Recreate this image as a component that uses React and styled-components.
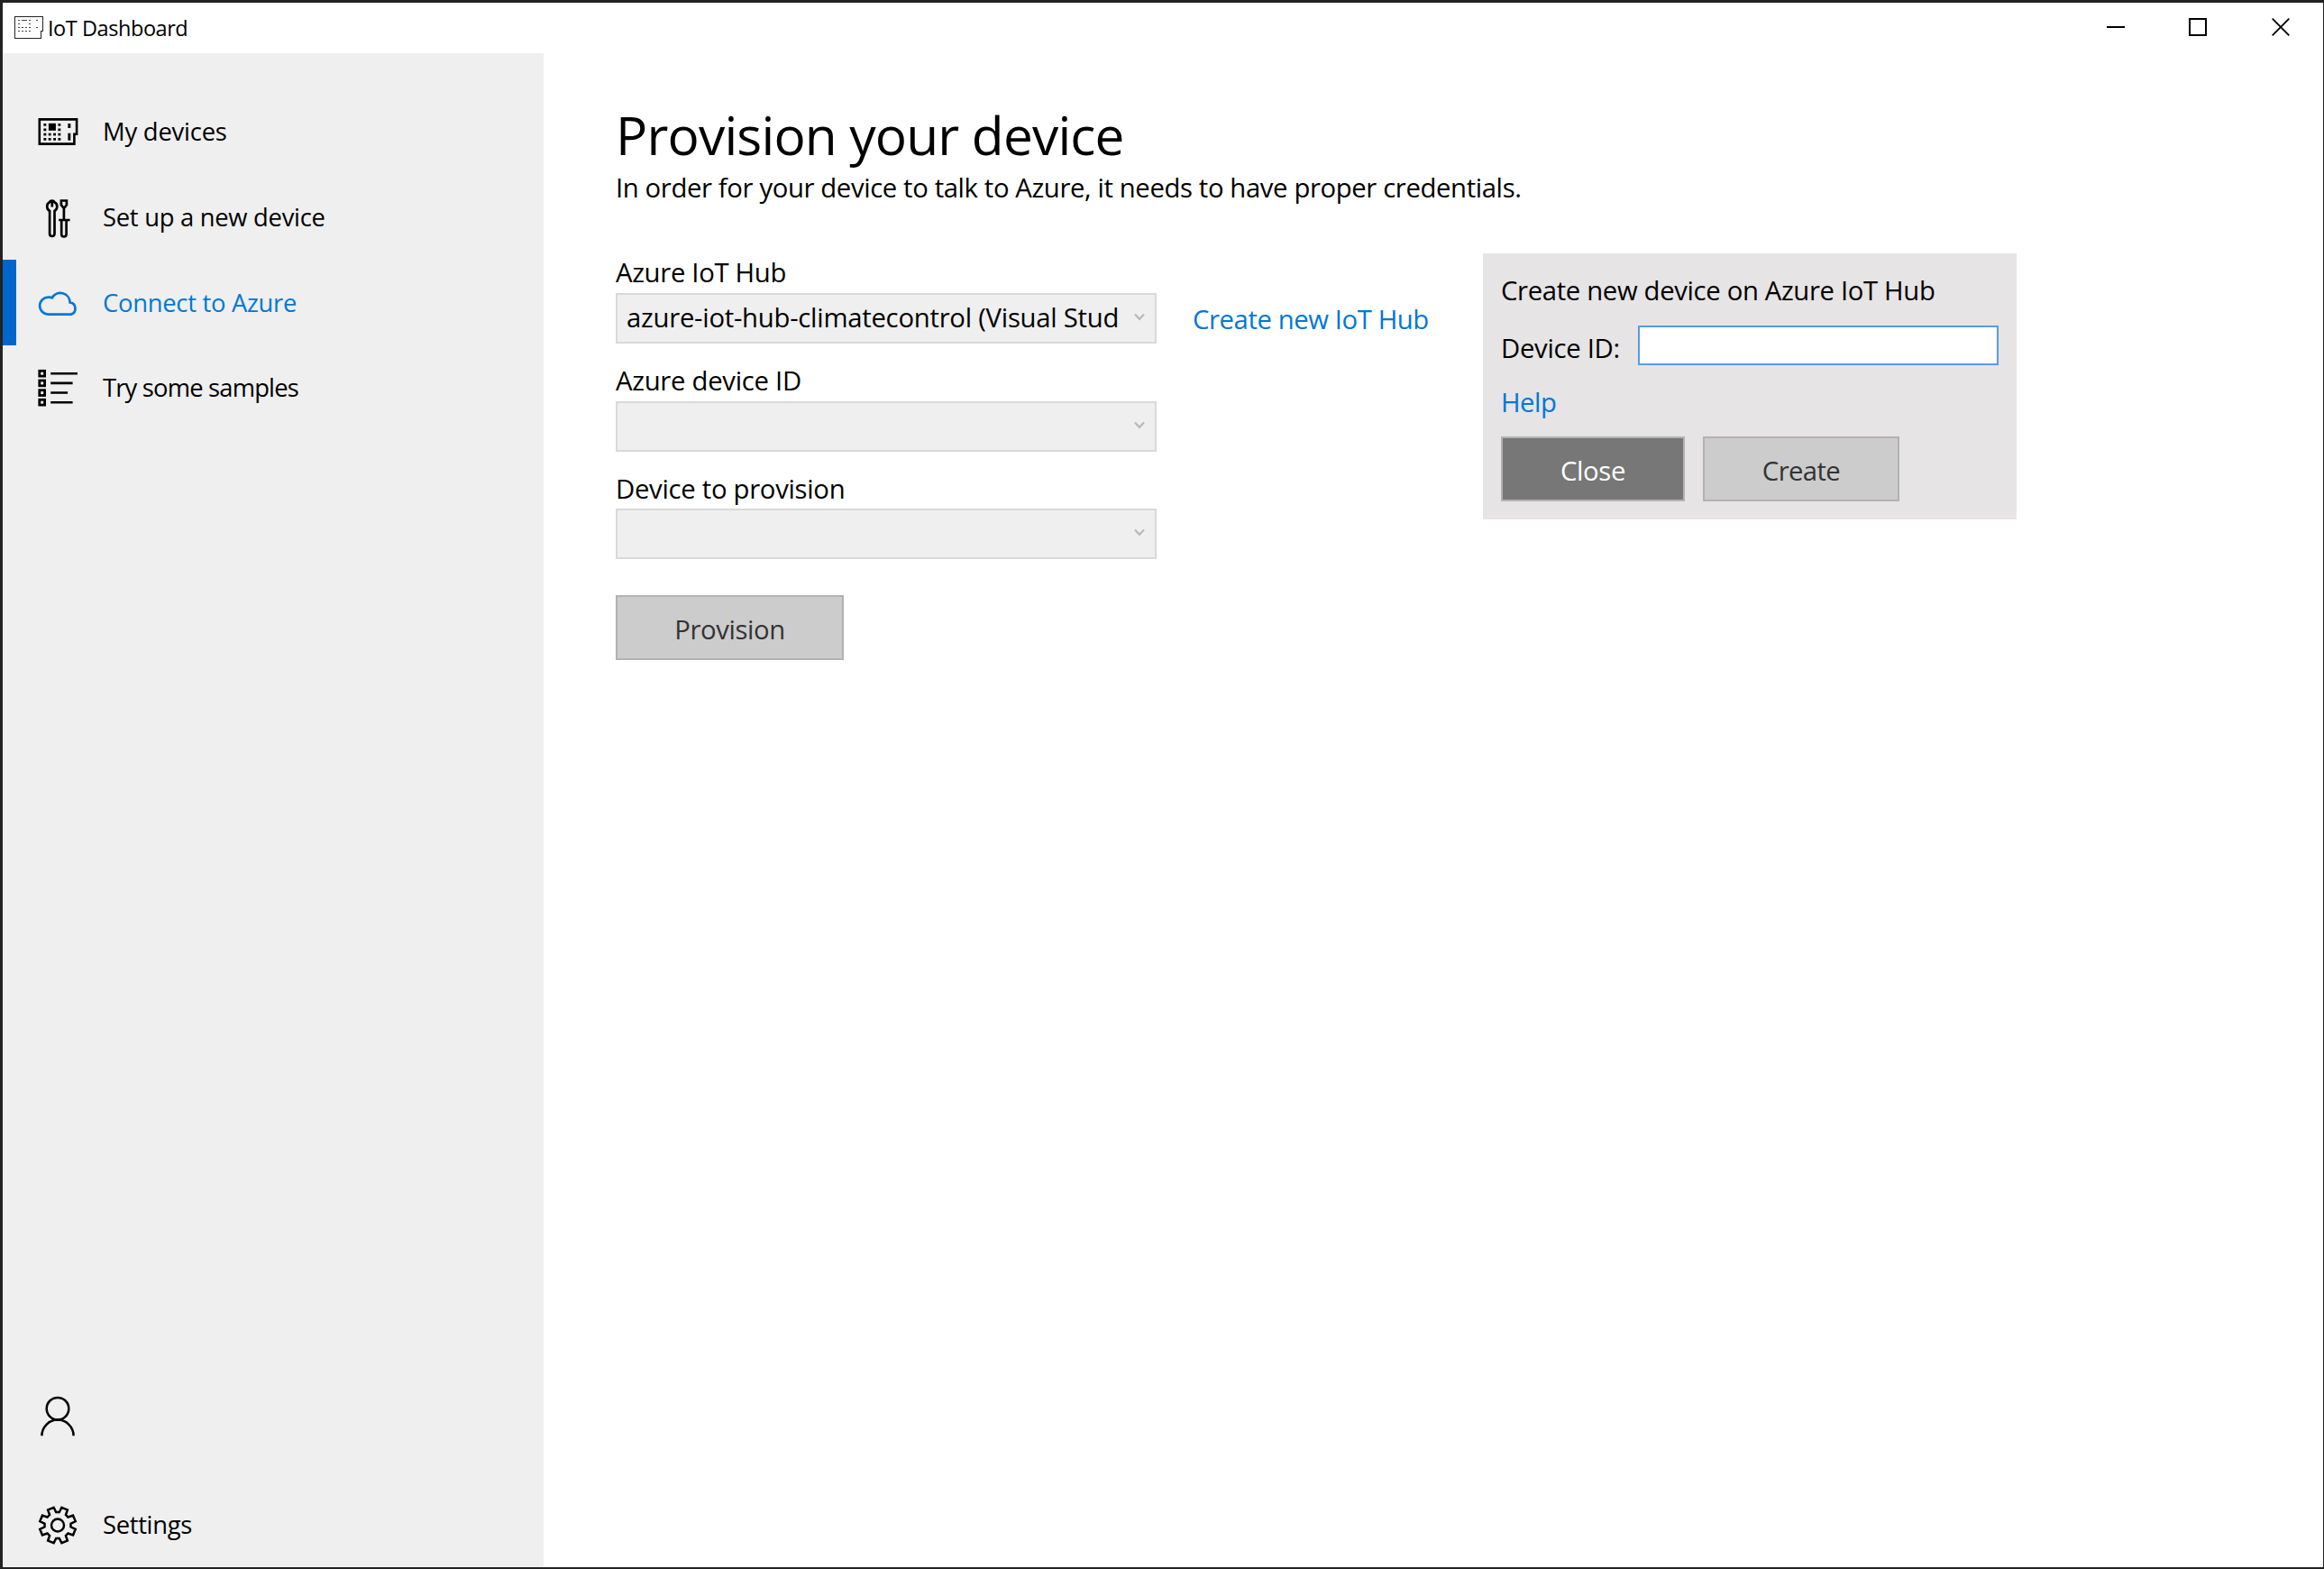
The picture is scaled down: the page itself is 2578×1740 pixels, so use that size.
import React from "react";
import styled, { createGlobalStyle } from "styled-components";

const GlobalStyle = createGlobalStyle`
  * { box-sizing: border-box; }
  body {
    margin: 0;
    background: #222;
    font-family: "Open Sans", "Liberation Sans", sans-serif;
    color: #000;
  }
`;

const AppWindow = styled.div`
  display: flex;
  flex-direction: column;
  width: 100vw;
  height: 100vh;
  padding: 3px 1px 2px 3px;
  background: #222;
  overflow: hidden;
`;

const TitleBar = styled.header`
  display: flex;
  align-items: center;
  flex: none;
  height: 56px;
  padding-left: 13px;
  background: #fff;
`;

const WindowTitle = styled.span`
  flex: 1;
  margin-left: 5px;
  font-size: 23.5px;
  line-height: 32px;
  letter-spacing: -0.44px;
`;

const WindowButtons = styled.div`
  display: flex;
  height: 100%;
`;

const WindowButton = styled.button`
  display: grid;
  place-items: center;
  width: ${(p) => p.$width ?? 92}px;
  padding: 0 0 2px;
  border: 0;
  background: none;
`;

const Body = styled.div`
  display: flex;
  flex: 1;
  min-height: 0;
`;

const Sidebar = styled.nav`
  display: flex;
  flex-direction: column;
  flex: none;
  width: 600px;
  padding-top: 39px;
  background: #efefef;
`;

const NavItem = styled.a`
  display: flex;
  align-items: center;
  gap: 28px;
  height: 95px;
  padding-left: 24px;
  border-left: 15px solid ${(p) => (p.$active ? "#0066cc" : "transparent")};
  color: ${(p) => (p.$active ? "#0078d7" : "#000")};
`;

const NavLabel = styled.span`
  padding-bottom: ${(p) => p.$lift ?? 0}px;
  font-size: 27.4px;
  line-height: 41px;
  letter-spacing: ${(p) => p.$track}px;
`;

const NavSpacer = styled.div`
  flex: 1;
`;

const AccountItem = styled(NavItem)`
  margin-bottom: 24px;
`;

const Main = styled.main`
  flex: 1;
  padding: 55px 0 0 79px;
  background: #fff;
`;

const Heading = styled.h1`
  margin: 0;
  padding-left: 1px;
  font-size: 58.6px;
  font-weight: 400;
  line-height: 70px;
  letter-spacing: -0.83px;
`;

const Text = styled.div`
  font-size: 29.3px;
  line-height: 40px;
  letter-spacing: ${(p) => p.$track ?? -0.35}px;
  white-space: nowrap;
`;

const Intro = styled(Text)`
  margin: 4px 0 53px 1px;
`;

const Columns = styled.div`
  display: flex;
  align-items: flex-start;
  gap: 40px;
  padding-left: 1px;
`;

const Form = styled.div`
  display: flex;
  flex-direction: column;
  align-items: flex-start;
  width: 600px;
`;

const Field = styled.div`
  width: 100%;
  margin-bottom: 20px;
`;

const FieldLabel = styled(Text)`
  height: ${(p) => p.$height ?? 44}px;
  padding-top: 1px;
`;

const SelectBox = styled.div`
  display: flex;
  align-items: flex-start;
  height: 56px;
  padding: 5px 0 0 10px;
  border: 2px solid #d9d9d9;
  background: #efefef;
`;

const SelectValue = styled(Text)`
  width: 545px;
  overflow: hidden;
`;

const Chevron = styled.svg`
  flex: none;
  margin: 15px 0 0 18px;
`;

const Button = styled.button`
  width: ${(p) => p.$width}px;
  height: 72px;
  padding: 3px 0 0;
  border: 2px solid #b2b2b2;
  background: ${(p) => (p.$dark ? "#777" : "#ccc")};
  color: ${(p) => (p.$dark ? "#fff" : "#333")};
  font-family: inherit;
  font-size: 29.3px;
  line-height: 40px;
  letter-spacing: ${(p) => p.$track}px;
`;

const ProvisionButton = styled(Button)`
  margin-top: 20px;
`;

const HubLink = styled(Text)`
  width: 282px;
  margin-top: 53px;
  color: #0078d7;
`;

const Panel = styled.section`
  width: 592px;
  height: 295px;
  padding: 21px 20px 20px;
  background: #e6e4e5;
`;

const DeviceRow = styled.label`
  display: flex;
  align-items: flex-end;
  justify-content: space-between;
  height: 44px;
  margin: 19px 0 21px;
`;

const DeviceLabel = styled(Text)`
  line-height: 38px;
`;

const DeviceInput = styled.input`
  width: 400px;
  height: 44px;
  padding: 0 8px;
  border: 2px solid #569de5;
  border-radius: 0;
  outline: 0;
  background: #fff;
  font: inherit;
`;

const HelpLink = styled(Text)`
  color: #0078d7;
  margin-bottom: 18px;
`;

const ButtonRow = styled.div`
  display: flex;
  gap: 20px;
`;

const NavIcon = ({ top, left = 42, children }) => (
  <svg width="44" height="47" viewBox={`${left} ${top} 44 47`} fill="none" stroke="currentColor" strokeWidth="2.5" overflow="visible">
    {children}
  </svg>
);

const AppIcon = () => (
  <svg width="32" height="26" viewBox="16 18 32 26" fill="none" stroke="#222" shapeRendering="crispEdges">
    <path d="M16.5 18.5H47.5V34.5H45.5V42.5H16.5Z" />
    <path
      stroke="#444"
      d="M20 22.5h2M24 22.5h6M32 22.5h2M40 22.5h2M20 26.5h2M32 26.5h2M20 30.5h2M24 30.5h2M28 30.5h2M32 30.5h2M40 30.5h2M20 34.5h2M24 34.5h2M28 34.5h2M32 34.5h2"
    />
  </svg>
);

const BoardIcon = () => {
  const columns = [48, 53.3, 58.7, 64];
  const rows = [137, 142.5, 147.7, 153];
  return (
    <NavIcon top={122} left={41.6}>
      <path strokeWidth="2.6" d="M43.4 132.4H84.7V148.8H82V159.6H43.4Z" />
      <g fill="currentColor" stroke="none">
        {rows.map((y, r) =>
          columns.map((x, c) =>
            r < 2 && (c === 1 || c === 2) ? null : <rect key={`${x}-${y}`} x={x} y={y} width="2.9" height="2.7" />
          )
        )}
        <rect x="53.5" y="136.8" width="8" height="8" />
        <rect x="75" y="137" width="2.9" height="5" />
        <rect x="75" y="147.7" width="2.9" height="8" />
      </g>
    </NavIcon>
  );
};

const ToolsIcon = () => (
  <NavIcon top={217} left={41.8}>
    <path
      strokeWidth="2.7"
      d="M54.8 224.2C53 225 52 226.8 52 229C52 231.2 53.1 233 54.9 234V259.3A2.7 2.7 0 0 0 60.3 259.3V234C62 233 63.1 231.2 63.1 229C63.1 226.8 62 225 60.2 224.2C59.4 222.1 55.6 222.1 54.8 224.2ZM57.6 223V229.4"
    />
    <path strokeWidth="2.7" d="M67.7 222.5H73.7V227.3L71.6 230H69.8L67.7 227.3ZM70.7 230V244M65 244H77.4M68 244V259.8A2.7 2.7 0 0 0 73.4 259.8V244" />
  </NavIcon>
);

const CloudIcon = () => (
  <NavIcon top={312} left={41.4}>
    <path
      strokeWidth="2.7"
      d="M52.8 348.6A9.5 9.5 0 0 1 53.2 329.6Q55.2 329.4 57.2 330.3A10.6 10.6 0 0 1 77 335.4A6.8 6.8 0 0 1 78.2 348.6Z"
    />
  </NavIcon>
);

const ListIcon = () => (
  <NavIcon top={407} left={41.4}>
    {[411.3, 422, 432.7, 443.3].map((y) => (
      <rect key={y} x="43.2" y={y} width="5.8" height="5.8" strokeWidth="2.8" />
    ))}
    <path strokeWidth="2.6" d="M55.6 414.2H85.4M55.6 424.9H80M55.6 435.5H74.5M55.6 446.2H80" />
  </NavIcon>
);

const PersonIcon = () => (
  <NavIcon top={1548}>
    <circle cx="64" cy="1562.2" r="12.3" />
    <path d="M46.4 1592.2A17.6 17.6 0 0 1 81.6 1592.2" />
  </NavIcon>
);

const gearPoint = (radius, degrees) => {
  const a = (degrees * Math.PI) / 180;
  return `${(64 + radius * Math.sin(a)).toFixed(2)},${(1691.5 - radius * Math.cos(a)).toFixed(2)}`;
};

const gearOutline = Array.from({ length: 8 }, (_, i) => 22.5 + i * 45)
  .flatMap((a) => [gearPoint(14.6, a - 15.5), gearPoint(20.2, a - 10), gearPoint(20.2, a + 10), gearPoint(14.6, a + 15.5)])
  .join(" ");

const GearIcon = () => (
  <NavIcon top={1667}>
    <polygon points={gearOutline} />
    <circle cx="64" cy="1691.5" r="7" />
  </NavIcon>
);

const navItems = [
  { label: "My devices", track: -0.212, Icon: BoardIcon },
  { label: "Set up a new device", track: -0.287, Icon: ToolsIcon },
  { label: "Connect to Azure", track: -0.281, Icon: CloudIcon, active: true },
  { label: "Try some samples", track: -0.83, Icon: ListIcon, lift: 2 },
];

const Select = ({ label, track, labelHeight, value }) => (
  <Field>
    <FieldLabel $track={track} $height={labelHeight}>{label}</FieldLabel>
    <SelectBox>
      <SelectValue $track={-0.262}>{value}</SelectValue>
      <Chevron width="12" height="9" viewBox="0 0 12 9" fill="none" stroke="#b8b8b8" strokeWidth="2.2">
        <path d="M1 1.6L6 6.8L11 1.6" />
      </Chevron>
    </SelectBox>
  </Field>
);

export default function App() {
  return (
    <AppWindow>
      <GlobalStyle />
      <TitleBar>
        <AppIcon />
        <WindowTitle>IoT Dashboard</WindowTitle>
        <WindowButtons>
          <WindowButton aria-label="Minimize">
            <svg width="20" height="20" stroke="#000" strokeWidth="2"><path d="M0 10H20" /></svg>
          </WindowButton>
          <WindowButton aria-label="Maximize" $width={90}>
            <svg width="20" height="20" stroke="#000" strokeWidth="2" fill="none"><path d="M1 1H19V19H1Z" /></svg>
          </WindowButton>
          <WindowButton aria-label="Close" $width={94}>
            <svg width="20" height="20" stroke="#000" strokeWidth="1.8"><path d="M.7 .7L19.3 19.3M19.3 .7L.7 19.3" /></svg>
          </WindowButton>
        </WindowButtons>
      </TitleBar>
      <Body>
        <Sidebar>
          {navItems.map(({ label, track, Icon, active, lift }) => (
            <NavItem key={label} $active={active}>
              <Icon />
              <NavLabel $track={track} $lift={lift}>{label}</NavLabel>
            </NavItem>
          ))}
          <NavSpacer />
          <AccountItem><PersonIcon /></AccountItem>
          <NavItem>
            <GearIcon />
            <NavLabel $track={-0.33}>Settings</NavLabel>
          </NavItem>
        </Sidebar>
        <Main>
          <Heading>Provision your device</Heading>
          <Intro $track={-0.385}>
            In order for your device to talk to Azure, it needs to have proper credentials.
          </Intro>
          <Columns>
            <Form>
              <Select label="Azure IoT Hub" track={-0.33} value="azure-iot-hub-climatecontrol (Visual Stud" />
              <Select label="Azure device ID" track={-0.29} />
              <Select label="Device to provision" track={-0.3} labelHeight={43} />
              <ProvisionButton $width={253} $track={-0.404}>Provision</ProvisionButton>
            </Form>
            <HubLink $track={-0.42}>Create new IoT Hub</HubLink>
            <Panel>
              <Text $track={-0.348}>Create new device on Azure IoT Hub</Text>
              <DeviceRow>
                <DeviceLabel $track={-0.308}>Device ID:</DeviceLabel>
                <DeviceInput />
              </DeviceRow>
              <HelpLink $track={-0.482}>Help</HelpLink>
              <ButtonRow>
                <Button $dark $width={204} $track={-0.359}>Close</Button>
                <Button $width={218} $track={-0.62}>Create</Button>
              </ButtonRow>
            </Panel>
          </Columns>
        </Main>
      </Body>
    </AppWindow>
  );
}
